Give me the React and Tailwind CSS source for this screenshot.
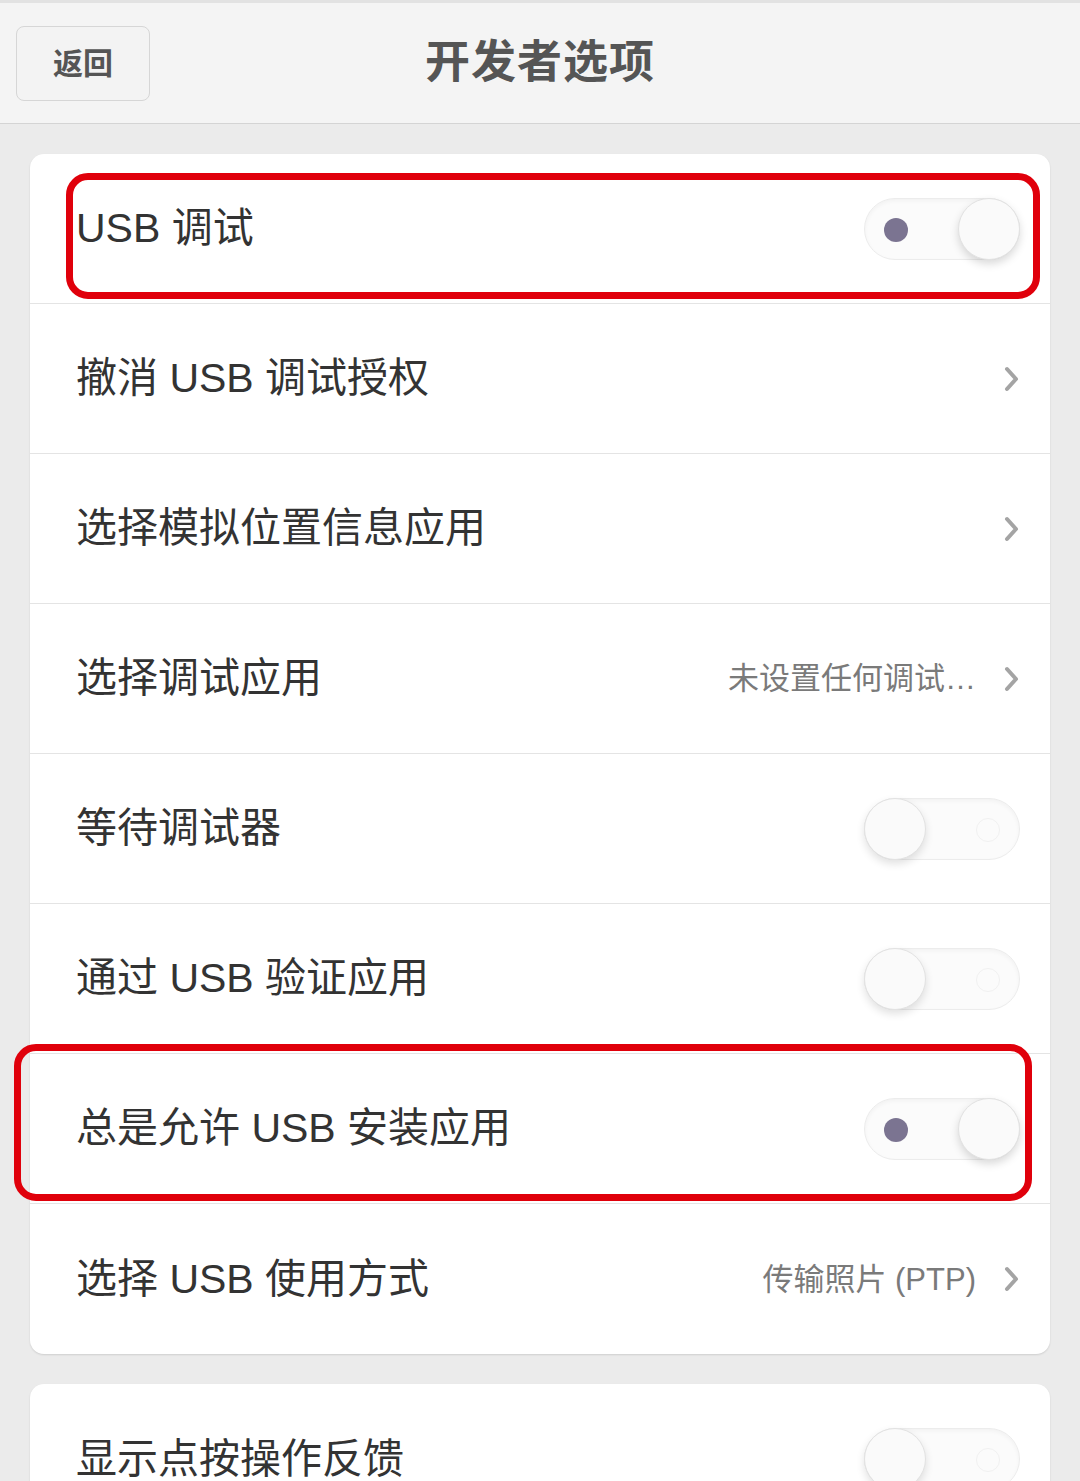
import React from "react";

const font = { fontFamily: '"Liberation Sans", "Noto Sans CJK SC", sans-serif' };

const Chevron = () => (
  <svg width="18" height="28" viewBox="0 0 18 28" className="ml-[26px] shrink-0">
    <path d="M5 4 L14 14 L5 24" fill="none" stroke="#a4a4a4" strokeWidth="4" strokeLinecap="round" strokeLinejoin="round" />
  </svg>
);

const Toggle = ({ on }) => (
  <div className="relative w-[156px] h-[62px] rounded-full border border-[#ececec] bg-[#fbfbfb] shadow-[inset_0_2px_4px_rgba(0,0,0,0.04)] shrink-0">
    {on ? (
      <>
        <div className="absolute left-[19px] top-[19px] w-[24px] h-[24px] rounded-full bg-[#7b7491]" />
        <div className="absolute right-[-1px] top-[-1px] w-[62px] h-[62px] rounded-full bg-[#fafafa] border border-[#e2e2e2] shadow-[0_4px_8px_rgba(0,0,0,0.15)]" />
      </>
    ) : (
      <>
        <div className="absolute right-[19px] top-[19px] w-[24px] h-[24px] rounded-full border border-[#f1f1f1]" />
        <div className="absolute left-[-1px] top-[-1px] w-[62px] h-[62px] rounded-full bg-[#fafafa] border border-[#e2e2e2] shadow-[0_4px_8px_rgba(0,0,0,0.12)]" />
      </>
    )}
  </div>
);

const Row = ({ label, value, type, last, highlight }) => (
  <div className={`relative h-[150px] flex items-center pl-[46px] pr-[30px] ${last ? "" : "border-b border-[#e4e4e4]"}`}>
    <span className="text-[41px] text-[#333] flex-1 leading-none">{label}</span>
    {value && <span className="text-[31px] text-[#7a7a7a] leading-none">{value}</span>}
    {type === "link" && <Chevron />}
    {type === "on" && <Toggle on />}
    {type === "off" && <Toggle />}
    {highlight === 1 && (
      <div className="absolute left-[36px] right-[10px] top-[19px] bottom-[4px] border-[7px] border-[#e0000b] rounded-[22px]" />
    )}
    {highlight === 2 && (
      <div className="absolute left-[-16px] right-[18px] top-[-10px] bottom-[2px] border-[7px] border-[#e0000b] rounded-[22px]" />
    )}
  </div>
);

const rows = [
  { label: "USB 调试", type: "on", highlight: 1 },
  { label: "撤消 USB 调试授权", type: "link" },
  { label: "选择模拟位置信息应用", type: "link" },
  { label: "选择调试应用", value: "未设置任何调试…", type: "link" },
  { label: "等待调试器", type: "off" },
  { label: "通过 USB 验证应用", type: "off" },
  { label: "总是允许 USB 安装应用", type: "on", highlight: 2 },
  { label: "选择 USB 使用方式", value: "传输照片 (PTP)", type: "link" },
];

export default function App() {
  return (
    <div style={font} className="w-[1080px] h-[1481px] overflow-hidden bg-[#ebebeb]">
      {/* header */}
      <div className="h-[124px] bg-[#f4f4f4] border-t-[3px] border-[#e2e2e2] border-b border-b-[#d4d4d4] relative flex items-center justify-center">
        <button className="absolute left-[16px] top-[23px] w-[134px] h-[75px] rounded-[8px] border border-[#d6d6d6] bg-[#f3f3f3] text-[30px] font-bold text-[#555]">
          返回
        </button>
        <h1 className="text-[45px] font-bold text-[#555] tracking-[1px]">开发者选项</h1>
      </div>

      <div className="px-[30px] pt-[30px] flex flex-col gap-[30px]">
        <div className="bg-white rounded-[14px] shadow-[0_1px_2px_rgba(0,0,0,0.12)]">
          {rows.map((r, i) => (
            <Row key={i} {...r} last={i === rows.length - 1} />
          ))}
        </div>
        <div className="bg-white rounded-[14px] shadow-[0_1px_2px_rgba(0,0,0,0.12)]">
          <Row label="显示点按操作反馈" type="off" last />
        </div>
      </div>
    </div>
  );
}
